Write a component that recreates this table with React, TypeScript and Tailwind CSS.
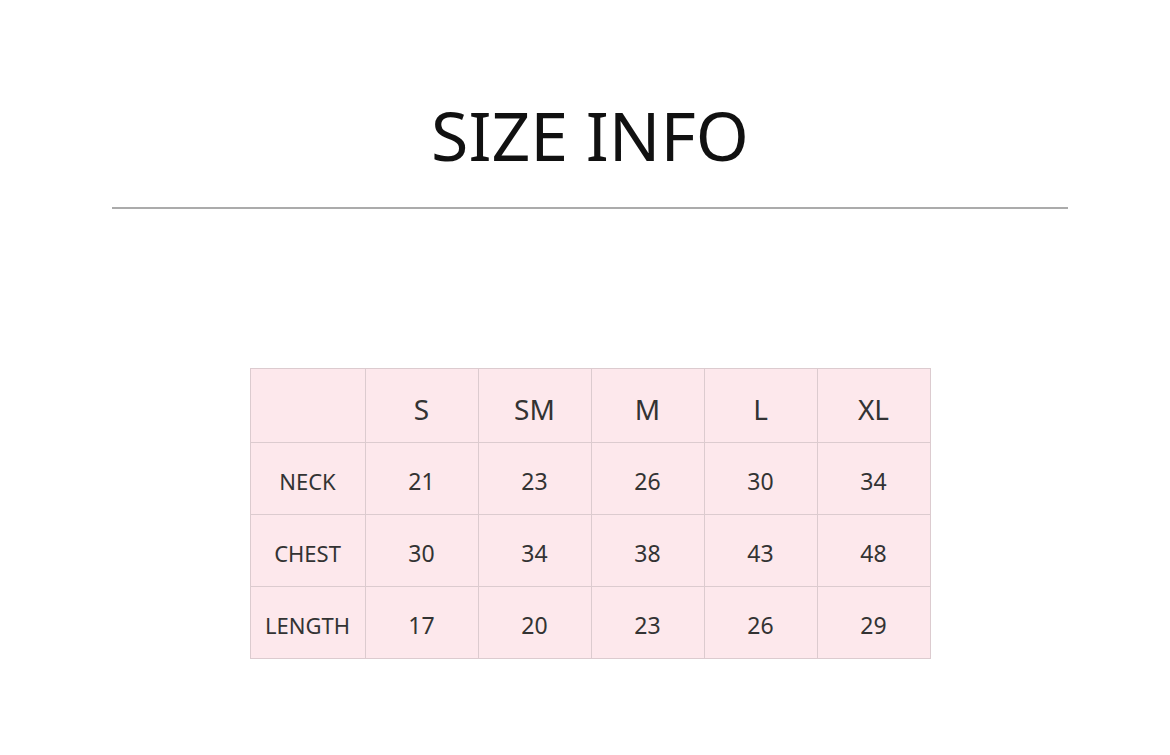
import React from "react";

const sizes = ["S", "SM", "M", "L", "XL"];
const rows: [string, number[]][] = [
  ["NECK", [21, 23, 26, 30, 34]],
  ["CHEST", [30, 34, 38, 43, 48]],
  ["LENGTH", [17, 20, 23, 26, 29]],
];

export default function App() {
  return (
    <div
      className="w-[1170px] h-[755px] bg-white flex flex-col items-center overflow-hidden pl-[10px]"
      style={{ fontFamily: '"Noto Sans", "Open Sans", sans-serif' }}
    >
      <div className="mt-[84px] h-[100px] flex items-center justify-center text-[68px] leading-none text-[#111] pt-[2px]">
        SIZE INFO
      </div>
      <div className="mt-[23px] w-[956px] h-[2px] bg-[#ababab]" />
      <div className="mt-[159px] grid grid-cols-[115px_113px_113px_113px_113px_113px] bg-[#fde8ec] border-l border-t border-[#dccbcf] text-[#333]">
        <div className="h-[74px] border-r border-b border-[#dccbcf]" />
        {sizes.map((s) => (
          <div
            key={s}
            className="h-[74px] flex items-center justify-center pt-[6px] border-r border-b border-[#dccbcf] text-[28px]"
          >
            {s}
          </div>
        ))}
        {rows.map(([label, vals]) => (
          <React.Fragment key={label}>
            <div className="h-[72px] flex items-center justify-center pt-[6px] border-r border-b border-[#dccbcf] text-[22px]">
              {label}
            </div>
            {vals.map((v, i) => (
              <div
                key={i}
                className="h-[72px] flex items-center justify-center pt-[6px] border-r border-b border-[#dccbcf] text-[23px]"
              >
                {v}
              </div>
            ))}
          </React.Fragment>
        ))}
      </div>
    </div>
  );
}
